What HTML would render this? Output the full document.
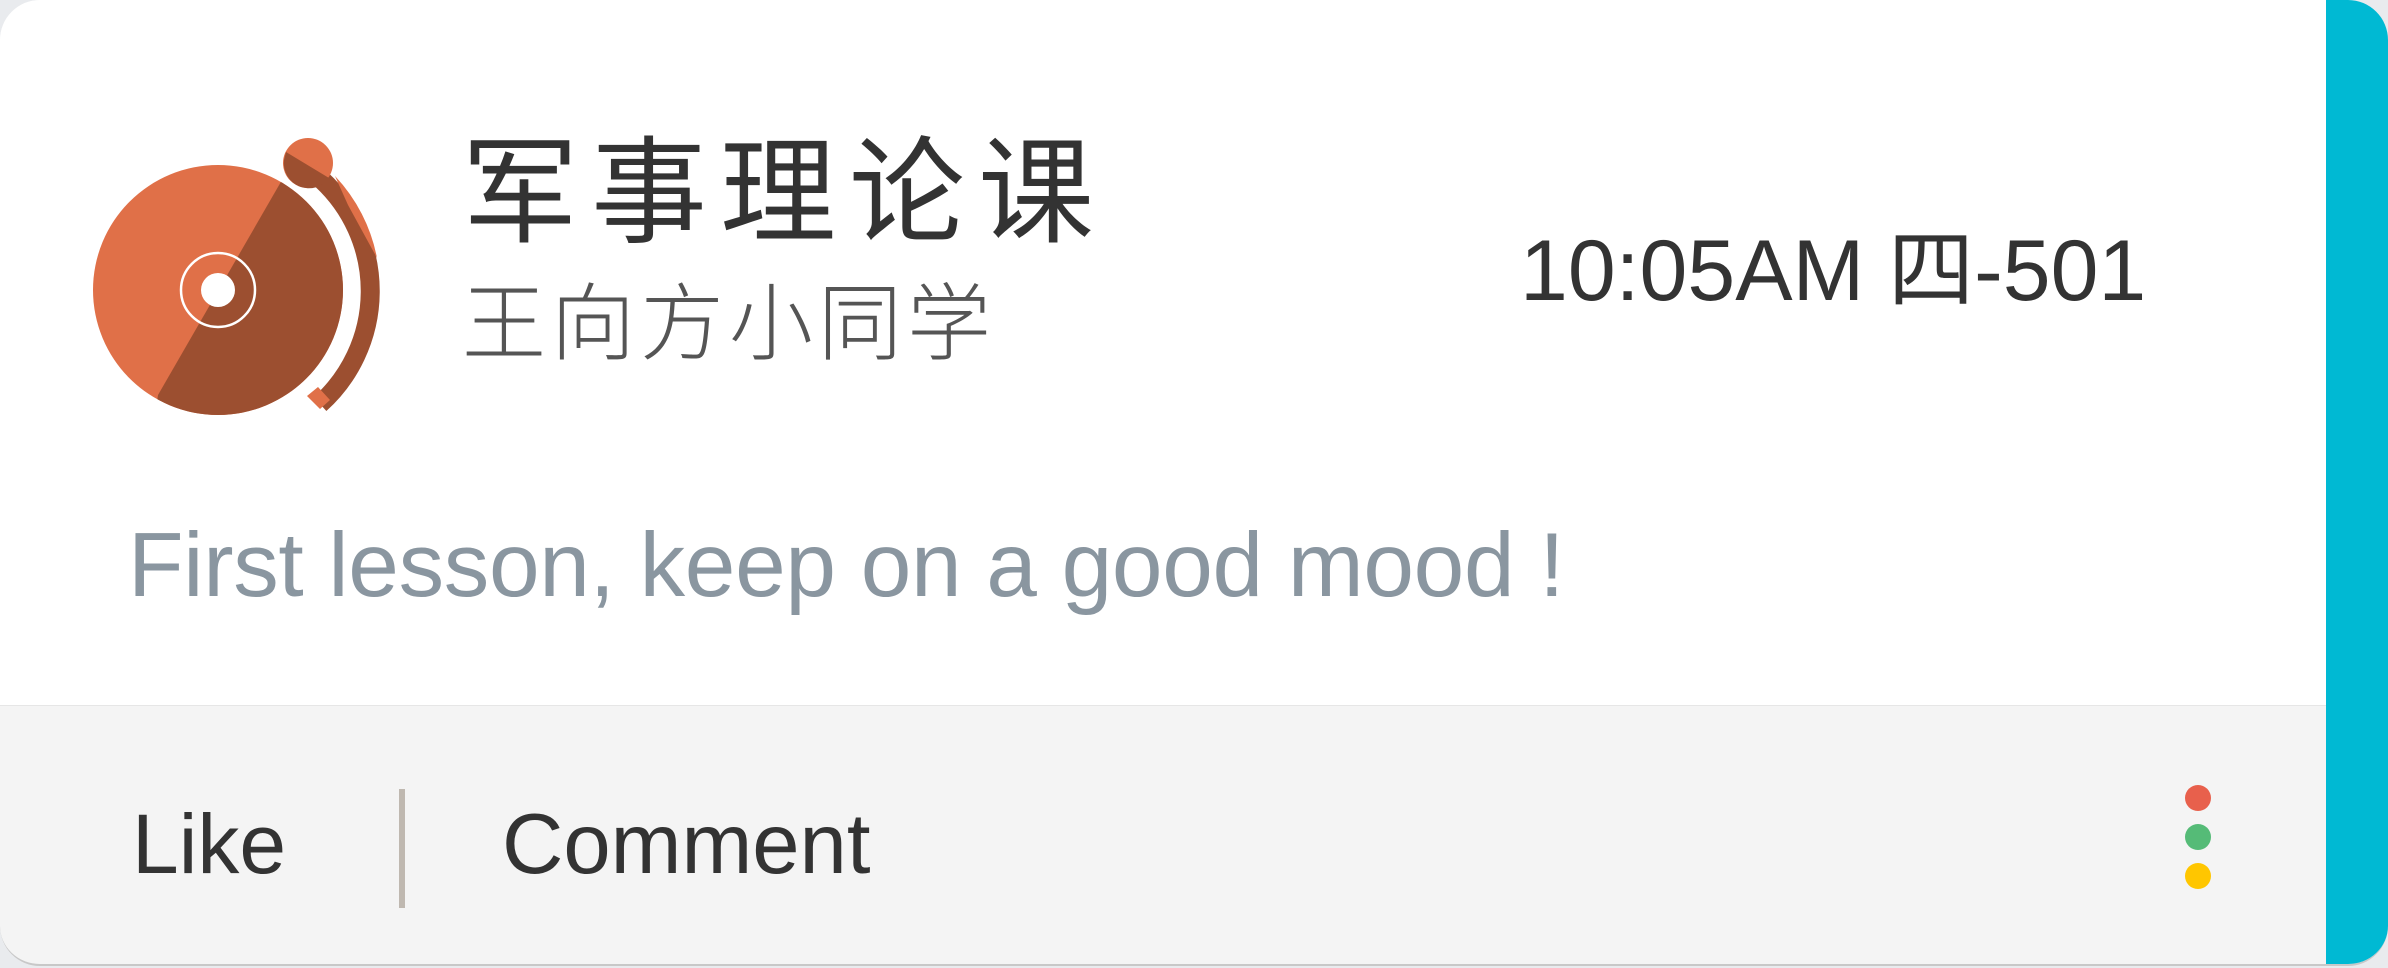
<!DOCTYPE html>
<html><head><meta charset="utf-8"><style>
html,body{margin:0;padding:0;background:#e9ebee;}
body{width:2388px;height:968px;position:relative;overflow:hidden;font-family:"Liberation Sans","Noto Sans CJK SC",sans-serif;}
.card{position:absolute;left:0;top:0;width:2388px;height:966px;background:#f4f4f4;border-radius:40px;overflow:hidden;border-bottom:2px solid #c8c8c8;box-sizing:border-box}
.top{position:absolute;left:0;top:0;width:2326px;height:705px;background:#fff;border-bottom:1px solid #e6e6e6}
.bar{position:absolute;left:2326px;top:0;width:62px;height:968px;background:#00b9d3}
.t{position:absolute;white-space:nowrap;line-height:1}
.dot{position:absolute;left:2185px;width:26px;height:26px;border-radius:50%}
</style></head><body>
<div class="card">
<div class="top"></div>
<div class="bar"></div>
<svg style="position:absolute;left:0;top:0" width="500" height="450">
<defs><clipPath id="c"><circle cx="218" cy="290" r="125"/></clipPath></defs>
<circle cx="218" cy="290" r="125" fill="#e07048"/>
<polygon points="282,180 500,180 500,450 150,450 158,395" fill="#9c4f30" clip-path="url(#c)"/>
<circle cx="218" cy="290" r="37" fill="none" stroke="#fff" stroke-width="2.5"/>
<circle cx="218" cy="290" r="17" fill="#fff"/>
<path d="M322 180 A152 152 0 0 1 320 404" fill="none" stroke="#9c4f30" stroke-width="19"/>
<path d="M335 176 A165 165 0 0 1 377 258 L348 205 Z" fill="#e07048"/>
<path d="M307 396 L320 409 L330 400 L318 387 Z" fill="#e07048"/>
<circle cx="308" cy="163" r="25" fill="#e07048"/>
<path d="M286 152 L329 178 A25 25 0 0 1 284 160 Z" fill="#9c4f30"/>
</svg>
<div class="t" style="left:462px;top:135px;font-size:116px;letter-spacing:13px;color:#333">军事理论课</div>
<div class="t" style="left:462px;top:282px;font-size:84px;letter-spacing:5px;color:#555;font-weight:300">王向方小同学</div>
<div class="t" style="left:1520px;top:228px;font-size:86px;color:#333">10:05AM 四-501</div>
<div class="t" style="left:128px;top:520px;font-size:91px;letter-spacing:-0.3px;color:#8a96a0">First lesson, keep on a good mood !</div>
<div class="t" style="left:132px;top:802px;font-size:84px;color:#333">Like</div>
<div style="position:absolute;left:399px;top:789px;width:6px;height:119px;background:#bfb8b0"></div>
<div class="t" style="left:502px;top:802px;font-size:85px;color:#333">Comment</div>
<div class="dot" style="top:785px;background:#e8604c"></div>
<div class="dot" style="top:824px;background:#55bb77"></div>
<div class="dot" style="top:863px;background:#ffc600"></div>
</div>
</body></html>
